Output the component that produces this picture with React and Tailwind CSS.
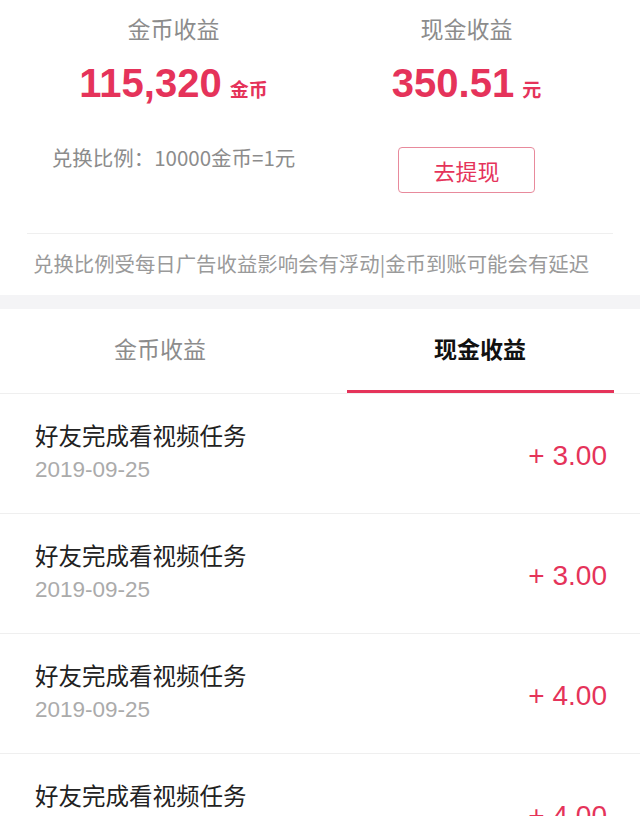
import React from 'react';

const cjk = { fontFamily: '"Noto Sans CJK SC", sans-serif' };
const num = { fontFamily: '"Liberation Sans", "Noto Sans CJK SC", sans-serif' };

const records = [
  { id: 1, title: '好友完成看视频任务', date: '2019-09-25', amount: '3.00' },
  { id: 2, title: '好友完成看视频任务', date: '2019-09-25', amount: '3.00' },
  { id: 3, title: '好友完成看视频任务', date: '2019-09-25', amount: '4.00' },
  { id: 4, title: '好友完成看视频任务', date: '2019-09-25', amount: '4.00' },
];

const App = () => {
  return (
    <div className="w-[640px] h-[816px] overflow-hidden bg-white" style={cjk}>
      {/* Summary */}
      <div className="px-[27px]">
        <div className="grid grid-cols-2">
          <div className="flex flex-col items-center">
            <div className="pt-[12px] text-[23px] leading-[32px] text-[#8c8c8c]">金币收益</div>
            <div className="mt-[15px] flex items-baseline gap-[8px] text-[#e5335a]">
              <span className="text-[40px] leading-[48px] font-bold" style={num}>115,320</span>
              <span className="text-[19px] font-bold">金币</span>
            </div>
            <div className="mt-[38px] text-[20.5px] leading-[24px] text-[#8c8c8c] whitespace-nowrap">兑换比例：10000金币=1元</div>
          </div>
          <div className="flex flex-col items-center">
            <div className="pt-[12px] text-[23px] leading-[32px] text-[#8c8c8c]">现金收益</div>
            <div className="mt-[15px] flex items-baseline gap-[8px] text-[#e5335a]">
              <span className="text-[40px] leading-[48px] font-bold" style={num}>350.51</span>
              <span className="text-[19px] font-bold">元</span>
            </div>
            <button className="mt-[40px] w-[137px] h-[46px] rounded-[4px] border border-[#e88a9c] text-[22px] text-[#e5335a] flex items-center justify-center">
              去提现
            </button>
          </div>
        </div>
        <div className="mt-[40px] border-t border-[#efefef] pt-[15px] pb-[18px] pl-[6px] text-[20.4px] leading-[28px] text-[#9a9a9a] whitespace-nowrap">
          兑换比例受每日广告收益影响会有浮动|金币到账可能会有延迟
        </div>
      </div>

      <div className="h-[14px] bg-[#f4f4f6]" />

      {/* Tabs */}
      <div className="flex border-b border-[#efefef]">
        <div className="flex-1 h-[84px] flex items-center justify-center pb-[6px] text-[23px] text-[#8c8c8c]">
          金币收益
        </div>
        <div className="relative flex-1 h-[84px] flex items-center justify-center pb-[6px] text-[23px] font-bold text-[#111]">
          现金收益
          <div className="absolute bottom-0 left-[27px] right-[26px] h-[3px] bg-[#e5335a]" />
        </div>
      </div>

      {/* Records */}
      {records.map((item) => (
        <div key={item.id} className="h-[120px] border-b border-[#efefef] flex items-center justify-between pl-[35px] pr-[33px]">
          <div className="flex flex-col -mt-[4px]">
            <div className="text-[23.5px] leading-[32px] text-[#222]">{item.title}</div>
            <div className="mt-[5px] text-[22.5px] leading-[28px] text-[#ababab]" style={num}>{item.date}</div>
          </div>
          <div className="text-[28px] text-[#e5335a] pt-[4px]" style={num}>+ {item.amount}</div>
        </div>
      ))}
    </div>
  );
};

export default App;
